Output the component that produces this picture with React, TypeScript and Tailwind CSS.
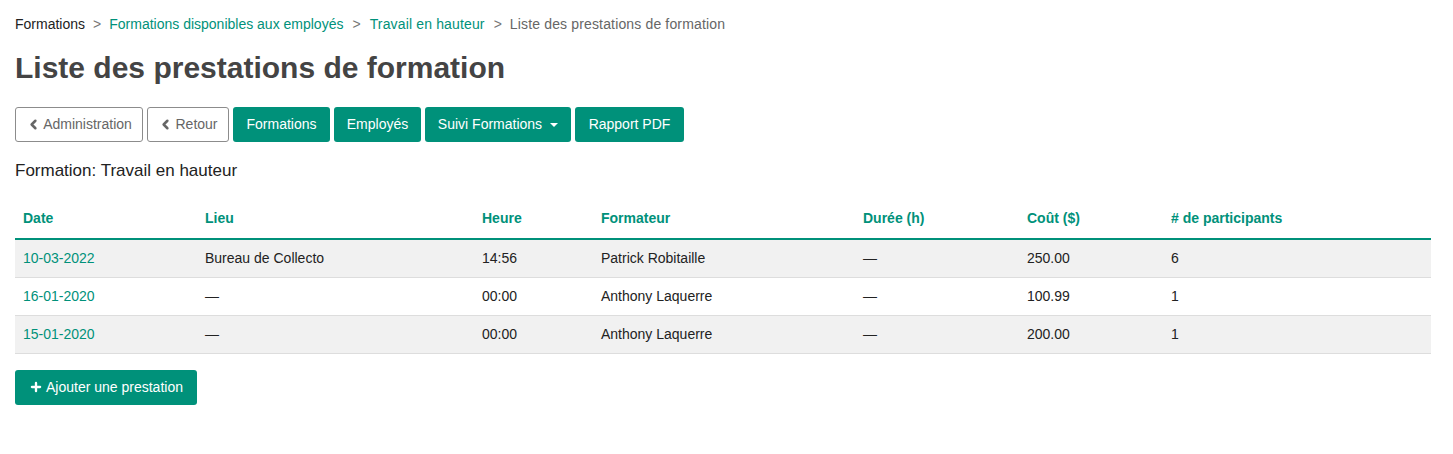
import { ChevronLeft, Plus } from 'lucide-react';

const rows = [
  { date: '10-03-2022', lieu: 'Bureau de Collecto', heure: '14:56', formateur: 'Patrick Robitaille', duree: '—', cout: '250.00', n: '6' },
  { date: '16-01-2020', lieu: '—', heure: '00:00', formateur: 'Anthony Laquerre', duree: '—', cout: '100.99', n: '1' },
  { date: '15-01-2020', lieu: '—', heure: '00:00', formateur: 'Anthony Laquerre', duree: '—', cout: '200.00', n: '1' },
];

const cols = [
  { label: 'Date', w: 'w-[182px]' },
  { label: 'Lieu', w: 'w-[277px]' },
  { label: 'Heure', w: 'w-[119px]' },
  { label: 'Formateur', w: 'w-[262px]' },
  { label: 'Durée (h)', w: 'w-[164px]' },
  { label: 'Coût ($)', w: 'w-[144px]' },
  { label: '# de participants', w: '' },
];

export default function App() {
  return (
    <div className="min-h-[454px] bg-white px-[15px] pt-[14px] font-['Liberation_Sans',Arial,sans-serif] text-[14px] text-[#333]">
      {/* Breadcrumb */}
      <div className="flex items-center gap-[8px] text-[14px] leading-[20px]">
        <span className="text-[#222]">Formations</span>
        <span className="text-[#777]">&gt;</span>
        <span className="text-[#00917a]">Formations disponibles aux employés</span>
        <span className="ml-[1px] text-[#777]">&gt;</span>
        <span className="ml-[1px] text-[#00917a] tracking-[0.15px]">Travail en hauteur</span>
        <span className="ml-[1px] text-[#777]">&gt;</span>
        <span className="text-[#666] tracking-[0.15px]">Liste des prestations de formation</span>
      </div>

      <h1 className="mt-[17px] text-[30px] font-bold leading-[33px] text-[#444]">
        Liste des prestations de formation
      </h1>

      {/* Toolbar */}
      <div className="mt-[23px] flex gap-[4px]">
        <button className="flex h-[35px] w-[128px] items-center justify-center gap-[2px] rounded-[3px] border border-[#8c8c8c] bg-white text-[#666]">
          <ChevronLeft className="h-[15px] w-[15px]" strokeWidth={4} />
          Administration
        </button>
        <button className="flex h-[35px] w-[82px] items-center justify-center gap-[2px] rounded-[3px] border border-[#8c8c8c] bg-white text-[#666]">
          <ChevronLeft className="h-[15px] w-[15px]" strokeWidth={4} />
          Retour
        </button>
        <button className="h-[35px] w-[97px] rounded-[3px] bg-[#00917a] text-white">Formations</button>
        <button className="h-[35px] w-[87px] rounded-[3px] bg-[#00917a] text-white">Employés</button>
        <button className="flex h-[35px] w-[146px] items-center justify-center gap-[8px] rounded-[3px] bg-[#00917a] text-white">
          Suivi Formations
          <span className="h-0 w-0 border-x-[4px] border-t-[4px] border-x-transparent border-t-white" />
        </button>
        <button className="h-[35px] w-[109px] rounded-[3px] bg-[#00917a] text-white">Rapport PDF</button>
      </div>

      <div className="mt-[19px] text-[17px] leading-[20px] text-[#222]">Formation: Travail en hauteur</div>

      {/* Table */}
      <table className="mt-[19px] w-[1416px] border-collapse">
        <thead>
          <tr className="border-b-2 border-[#00917a]">
            {cols.map((c) => (
              <th key={c.label} className={`${c.w} px-[8px] pb-[9px] pt-[8px] text-left text-[14px] font-bold text-[#00917a]`}>
                {c.label}
              </th>
            ))}
          </tr>
        </thead>
        <tbody>
          {rows.map((r, i) => (
            <tr key={r.date} className={`h-[38px] border-b border-[#ddd] ${i % 2 === 0 ? 'bg-[#f1f1f1]' : 'bg-white'}`}>
              <td className="px-[8px] text-[#00917a]">{r.date}</td>
              <td className="px-[8px] text-[#222]">{r.lieu}</td>
              <td className="px-[8px] text-[#222]">{r.heure}</td>
              <td className="px-[8px] text-[#222]">{r.formateur}</td>
              <td className="px-[8px] text-[#222]">{r.duree}</td>
              <td className="px-[8px] text-[#222]">{r.cout}</td>
              <td className="px-[8px] text-[#222]">{r.n}</td>
            </tr>
          ))}
        </tbody>
      </table>

      <button className="mt-[16px] flex h-[35px] w-[182px] items-center justify-center gap-[3px] rounded-[3px] bg-[#00917a] text-white">
        <Plus className="h-[14px] w-[14px]" strokeWidth={4} />
        Ajouter une prestation
      </button>
    </div>
  );
}
